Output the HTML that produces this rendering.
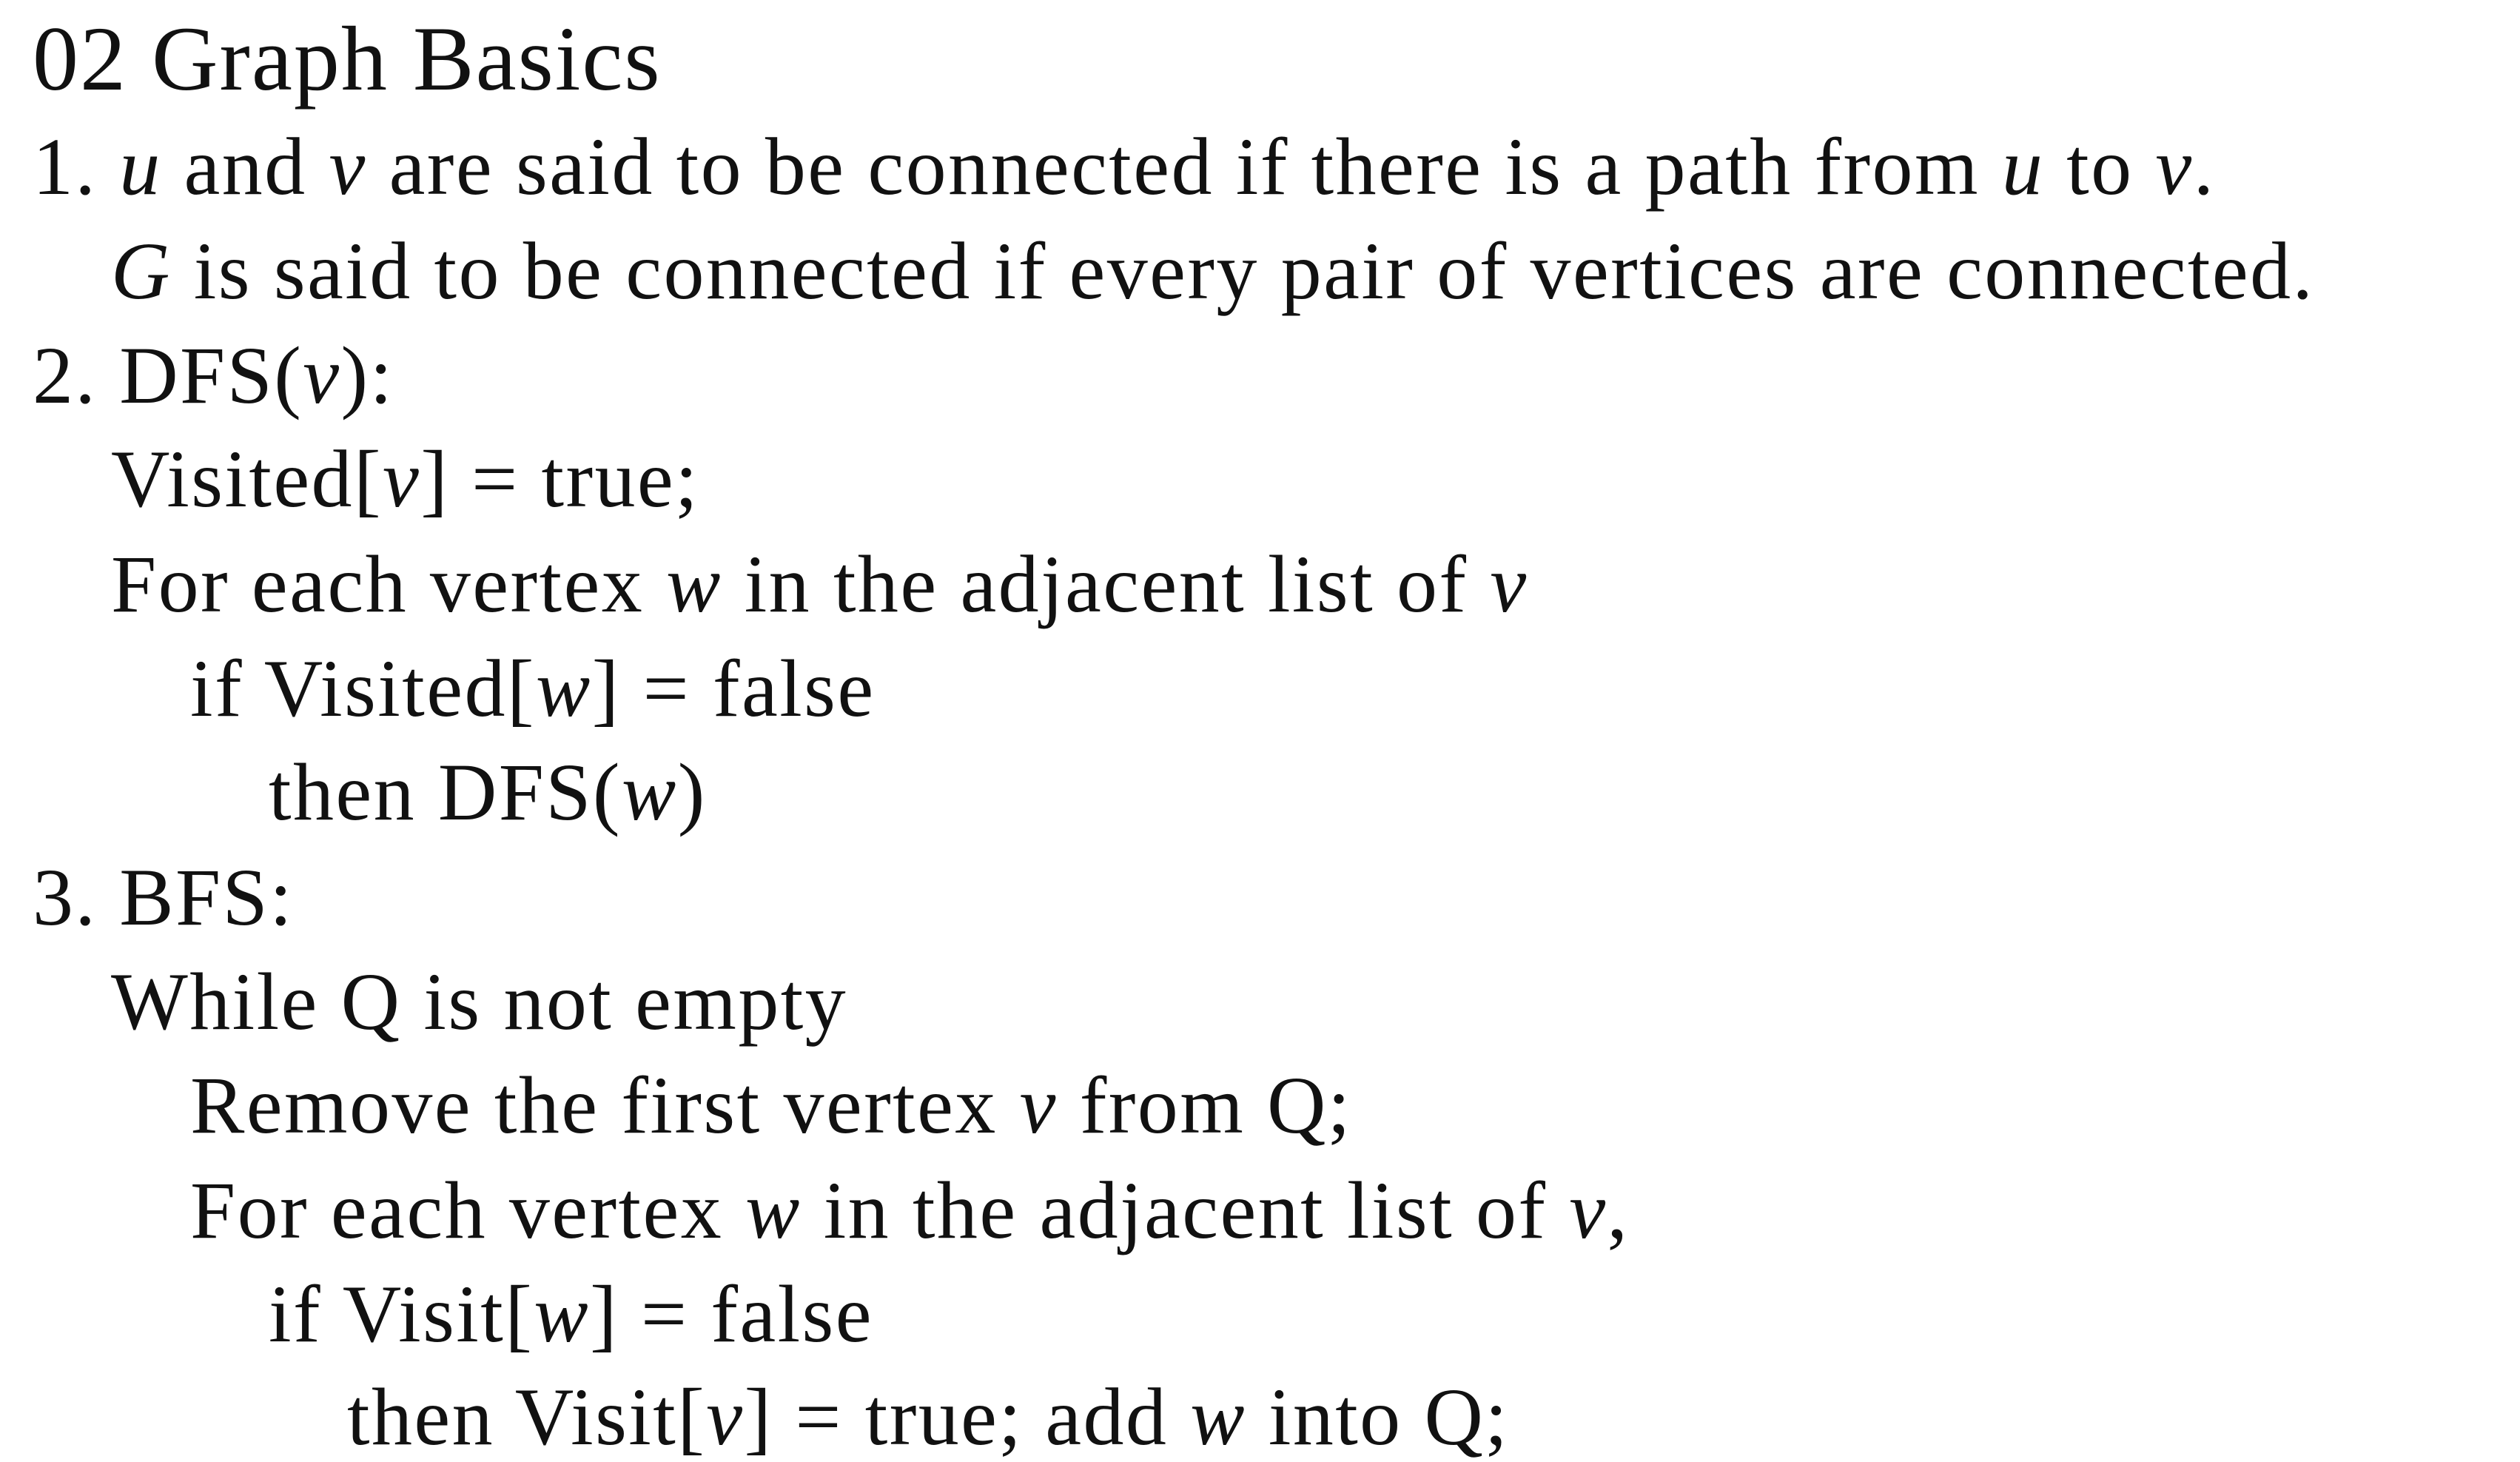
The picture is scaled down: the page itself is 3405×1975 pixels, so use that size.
<!DOCTYPE html>
<html><head><meta charset="utf-8"><style>
html,body{margin:0;padding:0;background:#fff;}
body{width:3405px;height:1972px;position:relative;overflow:hidden;font-family:"Liberation Serif",serif;color:#111;}
.l{position:absolute;font-size:110px;line-height:1;white-space:pre;letter-spacing:2.4px;}
i{font-style:italic;}
</style></head><body>
<div class="l" style="left:44px;top:18px;font-size:124px;letter-spacing:2px;">02 Graph Basics</div>
<div class="l" style="left:44px;top:170px;">1. <i>u</i> and <i>v</i> are said to be connected if there is a path from <i>u</i> to <i>v</i>.</div>
<div class="l" style="left:150px;top:311px;"><i>G</i> is said to be connected if every pair of vertices are connected.</div>
<div class="l" style="left:44px;top:452px;">2. DFS(<i>v</i>):</div>
<div class="l" style="left:150px;top:592px;">Visited[<i>v</i>] = true;</div>
<div class="l" style="left:150px;top:734px;">For each vertex <i>w</i> in the adjacent list of <i>v</i></div>
<div class="l" style="left:257px;top:875px;">if Visited[<i>w</i>] = false</div>
<div class="l" style="left:363px;top:1015px;">then DFS(<i>w</i>)</div>
<div class="l" style="left:44px;top:1157px;">3. BFS:</div>
<div class="l" style="left:150px;top:1298px;">While Q is not empty</div>
<div class="l" style="left:257px;top:1438px;">Remove the first vertex <i>v</i> from Q;</div>
<div class="l" style="left:257px;top:1580px;">For each vertex <i>w</i> in the adjacent list of <i>v</i>,</div>
<div class="l" style="left:363px;top:1720px;">if Visit[<i>w</i>] = false</div>
<div class="l" style="left:469px;top:1859px;">then Visit[<i>v</i>] = true; add <i>w</i> into Q;</div>
</body></html>
